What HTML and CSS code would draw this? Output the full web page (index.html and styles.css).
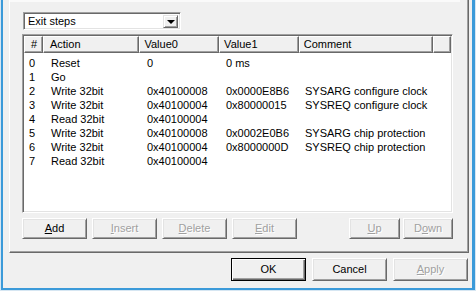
FILE: index.html
```html
<!DOCTYPE html>
<html>
<head>
<meta charset="utf-8">
<link rel="stylesheet" href="styles.css">
</head>
<body>
<div class="frame">
  <div class="client">
    <div class="tabpage">
      <div class="topband"></div>
      <div class="combo">
        <div class="combo-text">Exit steps</div>
        <div class="combo-btn"><span class="tri"></span></div>
      </div>
      <div class="list">
        <div class="header">
          <div class="hcell c0">#</div>
          <div class="hcell c1">Action</div>
          <div class="hcell c2">Value0</div>
          <div class="hcell c3">Value1</div>
          <div class="hcell c4">Comment</div>
          <div class="hcell c5"></div>
        </div>
        <div class="rows">
          <div class="row"><span class="c0">0</span><span class="c1">Reset</span><span class="c2">0</span><span class="c3">0 ms</span><span class="c4"></span></div>
          <div class="row"><span class="c0">1</span><span class="c1">Go</span><span class="c2"></span><span class="c3"></span><span class="c4"></span></div>
          <div class="row"><span class="c0">2</span><span class="c1">Write 32bit</span><span class="c2">0x40100008</span><span class="c3">0x0000E8B6</span><span class="c4">SYSARG configure clock</span></div>
          <div class="row"><span class="c0">3</span><span class="c1">Write 32bit</span><span class="c2">0x40100004</span><span class="c3">0x80000015</span><span class="c4">SYSREQ configure clock</span></div>
          <div class="row"><span class="c0">4</span><span class="c1">Read 32bit</span><span class="c2">0x40100004</span><span class="c3"></span><span class="c4"></span></div>
          <div class="row"><span class="c0">5</span><span class="c1">Write 32bit</span><span class="c2">0x40100008</span><span class="c3">0x0002E0B6</span><span class="c4">SYSARG chip protection</span></div>
          <div class="row"><span class="c0">6</span><span class="c1">Write 32bit</span><span class="c2">0x40100004</span><span class="c3">0x8000000D</span><span class="c4">SYSREQ chip protection</span></div>
          <div class="row"><span class="c0">7</span><span class="c1">Read 32bit</span><span class="c2">0x40100004</span><span class="c3"></span><span class="c4"></span></div>
        </div>
      </div>
      <div class="btnrow">
        <div class="btn w64"><u>A</u>dd</div>
        <div class="btn w64 dis"><u>I</u>nsert</div>
        <div class="btn w64 dis"><u>D</u>elete</div>
        <div class="btn w64 dis"><u>E</u>dit</div>
        <div class="spacer"></div>
        <div class="btn wup dis"><u>U</u>p</div>
        <div class="btn wdown dis">D<u>o</u>wn</div>
      </div>
    </div>
    <div class="dlgbtns">
      <div class="btn big default">OK</div>
      <div class="btn big">Cancel</div>
      <div class="btn big dis"><u>A</u>pply</div>
    </div>
  </div>
</div>
</body>
</html>
```

FILE: styles.css
```css
html, body {
  margin: 0;
  padding: 0;
}
body {
  width: 476px;
  height: 291px;
  overflow: hidden;
  background: #f0f0f0;
  font-family: "Liberation Sans", Arial, sans-serif;
  font-size: 11px;
  color: #000;
}
.frame {
  box-sizing: border-box;
  width: 476px;
  height: 291px;
  border-left: 1px solid #d6e6f2;
  border-right: 1px solid #d6e6f2;
  border-bottom: 1px solid #d6e6f2;
}
.client {
  box-sizing: border-box;
  height: 290px;
  border-left: 2px solid #3b9ad9;
  border-right: 3px solid #3b9ad9;
  border-bottom: 2px solid #3b9ad9;
  background: #f0f0f0;
  display: flex;
  flex-direction: column;
}
.tabpage {
  box-sizing: border-box;
  height: 253px;
  margin: 0 3px 0 6px;
  border-left: 1px solid #ffffff;
  border-right: 1px solid #696969;
  border-bottom: 1px solid #696969;
  box-shadow: inset -1px -1px 0 #a0a0a0;
  display: flex;
  flex-direction: column;
}
.topband {
  height: 2px;
  margin-right: 8px;
  background: #fafafa;
}
.combo {
  box-sizing: border-box;
  margin: 10px 0 0 13px;
  width: 158px;
  height: 18px;
  background: #fff;
  border-top: 1px solid #a0a0a0;
  border-left: 1px solid #a0a0a0;
  border-right: 1px solid #fff;
  border-bottom: 1px solid #fff;
  box-shadow: inset 1px 1px 0 #696969, inset -1px -1px 0 #e3e3e3;
  display: flex;
  padding: 2px 2px 1px 2px;
}
.combo-text {
  flex: 1;
  padding-left: 2px;
  line-height: 13px;
}
.combo-btn {
  box-sizing: border-box;
  width: 15px;
  height: 13px;
  background: #f0f0f0;
  border-top: 1px solid #e3e3e3;
  border-left: 1px solid #e3e3e3;
  border-right: 1px solid #696969;
  border-bottom: 1px solid #696969;
  box-shadow: inset 1px 1px 0 #fff, inset -1px -1px 0 #a0a0a0;
  display: flex;
  align-items: center;
  justify-content: center;
}
.tri {
  width: 0;
  height: 0;
  border-left: 4px solid transparent;
  border-right: 4px solid transparent;
  border-top: 4px solid #000;
  margin-top: 1px;
}
.list {
  box-sizing: border-box;
  margin: 4px 0 0 12px;
  width: 431px;
  height: 179px;
  background: #fff;
  border-top: 1px solid #a0a0a0;
  border-left: 1px solid #a0a0a0;
  border-right: 1px solid #fff;
  border-bottom: 1px solid #fff;
  box-shadow: inset 1px 1px 0 #696969, inset -1px -1px 0 #e3e3e3;
  padding: 1px;
  display: flex;
  flex-direction: column;
}
.header {
  display: flex;
  height: 17px;
}
.hcell {
  box-sizing: border-box;
  height: 17px;
  background: #f0f0f0;
  border-top: 1px solid #fff;
  border-left: 1px solid #fff;
  border-right: 1px solid #696969;
  border-bottom: 1px solid #696969;
  box-shadow: inset -1px -1px 0 #a0a0a0;
  padding-left: 6px;
  line-height: 14px;
  white-space: nowrap;
}
.c0 { width: 19px; }
.c1 { width: 97px; }
.c2 { width: 80px; }
.c3 { width: 80px; }
.c4 { width: 135px; }
.c5 { width: 18px; }
.hcell.c0 { padding-left: 6px; }
.hcell.c2, .hcell.c3, .hcell.c4 { padding-left: 4px; }
.rows {
  padding-top: 3px;
}
.row {
  display: flex;
  height: 14px;
  line-height: 14px;
  white-space: nowrap;
}
.row span {
  box-sizing: border-box;
  display: block;
  padding-left: 6px;
}
.row .c0 { padding-left: 5px; }
.row .c1 { padding-left: 8px; }
.row .c2 { padding-left: 7px; }
.row .c3 { padding-left: 6px; }
.row .c4 { padding-left: 5px; flex: 1; }
.btnrow {
  display: flex;
  margin: 5px 0 0 12px;
  width: 431px;
  gap: 5px;
}
.spacer {
  flex: 1;
}
.btn {
  box-sizing: border-box;
  height: 21px;
  background: #f0f0f0;
  border-top: 1px solid #fff;
  border-left: 1px solid #fff;
  border-right: 1px solid #696969;
  border-bottom: 1px solid #696969;
  box-shadow: inset 1px 1px 0 #e3e3e3, inset -1px -1px 0 #a0a0a0;
  display: flex;
  align-items: center;
  justify-content: center;
  padding-bottom: 1px;
}
.w64 { width: 65px; }
.wup { width: 51px; margin-right: -2px; }
.wdown { width: 50px; }
.dis {
  color: #a0a0a0;
  text-shadow: 1px 1px 0 #fff;
}
.dlgbtns {
  display: flex;
  justify-content: flex-end;
  gap: 6px;
  margin: 5px 4px 0 0;
}
.btn.big {
  width: 75px;
  height: 23px;
}
.btn.default {
  border: 1px solid #000;
  box-shadow: inset 1px 1px 0 #fff, inset -1px -1px 0 #696969, inset -2px -2px 0 #a0a0a0;
}
```
